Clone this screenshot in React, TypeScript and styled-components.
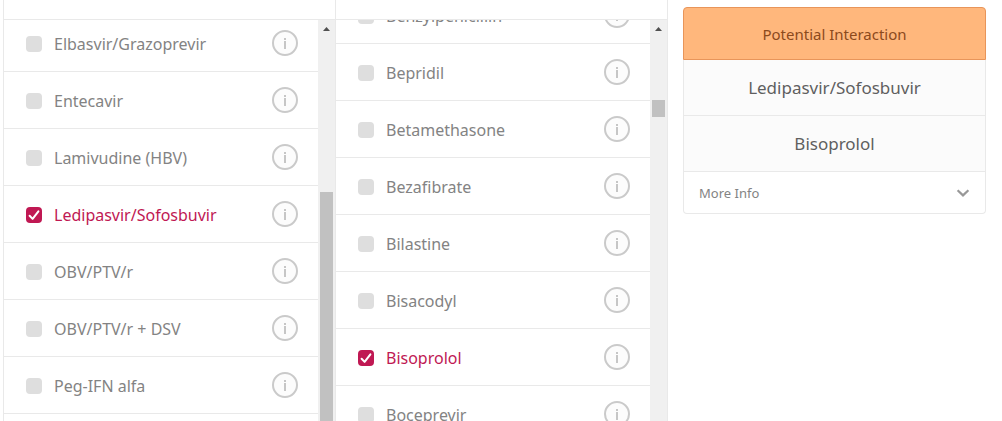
import React from "react";
import styled, { createGlobalStyle } from "styled-components";

const GlobalStyle = createGlobalStyle`
  *, *::before, *::after { box-sizing: border-box; }
  body {
    margin: 0;
    background: #fff;
    color: #838383;
    font-family: "Noto Sans", "Open Sans", sans-serif;
    font-size: 16px;
    overflow: hidden;
  }
`;

const Page = styled.main`
  display: grid;
  grid-template-columns: minmax(0, 332fr) minmax(0, 333fr) minmax(0, 334fr);
  height: 100vh;
  padding-left: 3px;
`;

const Column = styled.section<{ $last?: boolean }>`
  display: flex;
  flex-direction: column;
  min-height: 0;
  border: solid #e9e9e9;
  border-width: 0 ${(p) => (p.$last ? 1 : 0)}px 0 1px;
`;

const ColumnHeader = styled.header`
  flex: none;
  height: 20px;
  border-bottom: 1px solid #e9e9e9;
`;

const ColumnBody = styled.div`
  display: flex;
  flex: 1;
  min-height: 0;
`;

const ListViewport = styled.div`
  flex: 1;
  min-width: 0;
  overflow: hidden;
`;

const DrugList = styled.ul<{ $scrolled: number }>`
  list-style: none;
  margin: -${(p) => p.$scrolled}px 0 0;
  padding: 0;
`;

const DrugRow = styled.li`
  display: flex;
  align-items: center;
  justify-content: space-between;
  height: 57px;
  padding: 0 20px 0 22px;
  border-bottom: 1px solid #e9e9e9;
`;

const DrugLabel = styled.label<{ $active?: boolean }>`
  display: flex;
  align-items: center;
  gap: 12px;
  padding-top: 2px;
  line-height: 24px;
  white-space: nowrap;
  color: ${(p) => (p.$active ? "#c01853" : "#838383")};
`;

const CheckWrap = styled.span`
  display: grid;
  width: 16px;
  height: 16px;

  > * { grid-area: 1 / 1; }
  svg { pointer-events: none; }
`;

const Checkbox = styled.input`
  appearance: none;
  width: 16px;
  height: 16px;
  margin: 0;
  border-radius: 4px;
  background: #dedede;

  &:checked { background: #c01853; }
`;

const InfoButton = styled.button`
  flex: none;
  width: 26px;
  height: 26px;
  padding: 0;
  border: 0;
  background: none;

  svg { display: block; }
`;

const ScrollTrack = styled.div`
  flex: none;
  width: 17px;
  padding: 0 2px;
  overflow: hidden;
  background: #f0f0f0;

  svg { display: block; }
`;

const ScrollThumb = styled.div<{ $top: number; $length?: number }>`
  height: ${(p) => (p.$length ? `${p.$length}px` : "100%")};
  margin-top: ${(p) => p.$top}px;
  background: #c1c1c1;
`;

const Results = styled.aside`
  padding: 7px 16px 0 15px;
`;

const Card = styled.article`
  text-align: center;
`;

const CardTitle = styled.h2`
  margin: 0;
  padding: 14px 0 13px;
  border: 1px solid #e8955a;
  border-radius: 4px 4px 0 0;
  background: #ffb77c;
  color: #8c4a1c;
  font-size: 15px;
  font-weight: 400;
  line-height: 24px;
`;

const CardDrug = styled.p`
  margin: 0;
  padding: 16px 0 15px;
  border: solid #e9e9e9;
  border-width: 0 1px 1px;
  background: #fbfbfb;
  color: #5f5f5f;
  font-size: 17px;
  line-height: 24px;
`;

const MoreInfo = styled.button`
  display: flex;
  align-items: center;
  justify-content: space-between;
  width: 100%;
  height: 42px;
  padding: 0 15px;
  border: solid #e9e9e9;
  border-width: 0 1px 1px;
  border-radius: 0 0 4px 4px;
  background: #fff;
  color: #838383;
  font: inherit;
  font-size: 13px;
`;

const CheckMark = () => (
  <svg width="16" height="16" viewBox="0 0 16 16" aria-hidden="true">
    <path d="M3.6 8.8l3 3.1 5.8-7.6" fill="none" stroke="#fff" strokeWidth="2" strokeLinecap="round" strokeLinejoin="round" />
  </svg>
);

const InfoIcon = () => (
  <svg width="26" height="26" viewBox="0 0 26 26" aria-hidden="true">
    <circle cx="13" cy="13" r="12" fill="#fcfcfc" stroke="#cacaca" strokeWidth="2" />
    <path d="M12 8h2v2h-2zM12 11h2V19h-2z" fill="#c6c6c6" />
  </svg>
);

const ScrollArrow = () => (
  <svg width="13" height="17" viewBox="0 0 13 17" aria-hidden="true">
    <path d="M3 11L6.5 7 10 11z" fill="#505050" />
  </svg>
);

const Chevron = () => (
  <svg width="14" height="10" viewBox="0 0 14 10" aria-hidden="true">
    <path d="M1.6 2.2L7 7.4l5.4-5.2" fill="none" stroke="#989898" strokeWidth="2.2" />
  </svg>
);

interface DrugColumnProps {
  title: string;
  drugs: string[];
  selected: string;
  scrolled: number;
  thumbTop: number;
  thumbLength?: number;
  last?: boolean;
}

function DrugColumn({ title, drugs, selected, scrolled, thumbTop, thumbLength, last }: DrugColumnProps) {
  return (
    <Column $last={last} aria-label={title}>
      <ColumnHeader />
      <ColumnBody>
        <ListViewport>
          <DrugList $scrolled={scrolled}>
            {drugs.map((name) => {
              const active = name === selected;
              return (
                <DrugRow key={name}>
                  <DrugLabel $active={active}>
                    <CheckWrap>
                      <Checkbox type="checkbox" defaultChecked={active} />
                      {active && <CheckMark />}
                    </CheckWrap>
                    {name}
                  </DrugLabel>
                  <InfoButton type="button" aria-label={`About ${name}`}>
                    <InfoIcon />
                  </InfoButton>
                </DrugRow>
              );
            })}
          </DrugList>
        </ListViewport>
        <ScrollTrack aria-hidden="true">
          <ScrollArrow />
          <ScrollThumb $top={thumbTop} $length={thumbLength} />
        </ScrollTrack>
      </ColumnBody>
    </Column>
  );
}

const hepDrugs = [
  "Elbasvir/Grazoprevir",
  "Entecavir",
  "Lamivudine (HBV)",
  "Ledipasvir/Sofosbuvir",
  "OBV/PTV/r",
  "OBV/PTV/r + DSV",
  "Peg-IFN alfa",
];

const coDrugs = [
  "Benzylpenicillin",
  "Bepridil",
  "Betamethasone",
  "Bezafibrate",
  "Bilastine",
  "Bisacodyl",
  "Bisoprolol",
  "Boceprevir",
];

export default function App() {
  return (
    <>
      <GlobalStyle />
      <Page>
        <DrugColumn title="HEP drugs" drugs={hepDrugs} selected="Ledipasvir/Sofosbuvir" scrolled={5} thumbTop={155} />
        <DrugColumn title="Co-medications" drugs={coDrugs} selected="Bisoprolol" scrolled={33} thumbTop={63} thumbLength={17} last />
        <Results aria-label="Drug interactions">
          <Card>
            <CardTitle>Potential Interaction</CardTitle>
            <CardDrug>Ledipasvir/Sofosbuvir</CardDrug>
            <CardDrug>Bisoprolol</CardDrug>
            <MoreInfo type="button">
              More Info
              <Chevron />
            </MoreInfo>
          </Card>
        </Results>
      </Page>
    </>
  );
}
